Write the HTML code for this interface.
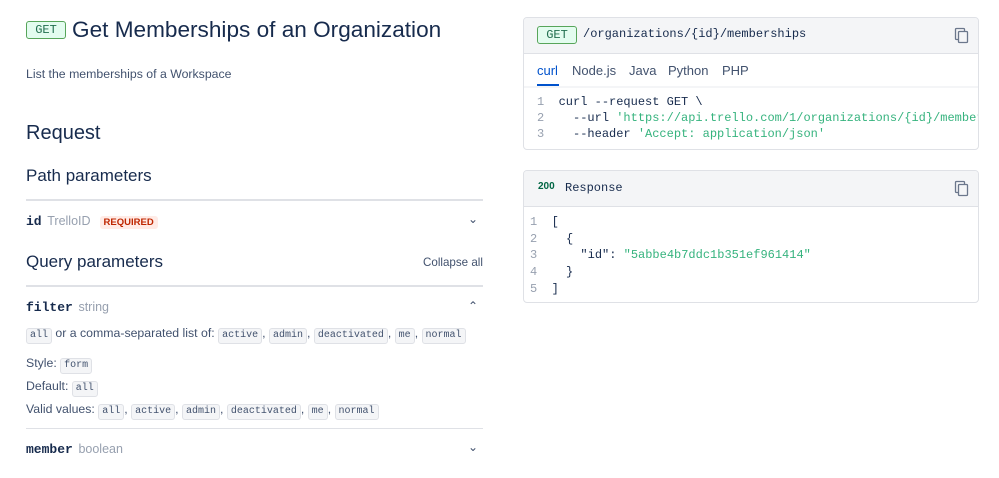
<!DOCTYPE html>
<html><head><meta charset="utf-8"><style>
*{margin:0;padding:0;box-sizing:border-box}
body{width:999px;height:478px;background:#fff;font-family:"Liberation Sans",sans-serif;color:#172b4d;position:relative;overflow:hidden}
.a{position:absolute;white-space:nowrap}
.m{font-family:"Liberation Mono",monospace}
.c{font-family:"Liberation Mono",monospace;font-size:10px;background:#f4f5f7;border:1px solid #dfe1e6;border-radius:3px;padding:0 3px;color:#42526e;line-height:14px;display:inline-block}
.t{font-size:12.3px;color:#42526e}
.hr{position:absolute;left:26px;width:457px;height:2px;background:#dfe1e6}
.card{position:absolute;left:523px;width:456px;border:1px solid #dfe1e6;border-radius:4px;overflow:hidden}
.hd{background:#f4f5f7;height:36px;border-bottom:1px solid #dfe1e6;position:relative}
.code{font-family:"Liberation Mono",monospace;font-size:12px;color:#172b4d;position:absolute;white-space:pre}
.ln{color:#97a0af}
.g{color:#36b37e}
</style></head><body>
<div class="a m" style="left:26px;top:21px;width:40px;height:18px;border:1px solid #57a55a;background:#e3fcef;border-radius:3px;color:#216e4e;font-size:12px;text-align:center;line-height:16px">GET</div>
<div class="a" style="left:72px;top:17px;font-size:22.6px;color:#172b4d">Get Memberships of an Organization</div>
<div class="a t" style="left:26px;top:67px">List the memberships of a Workspace</div>
<div class="a" style="left:26px;top:122px;font-size:20px">Request</div>
<div class="a" style="left:26px;top:166px;font-size:17px">Path parameters</div>
<div class="hr" style="top:199px"></div>
<div class="a" style="left:26px;top:213px;font-size:13px"><b class="m" style="font-size:13px">id</b> <span style="color:#97a0af;margin-left:2px;font-size:12.5px">TrelloID</span><span style="margin-left:9px;background:#ffebe6;color:#bf2600;font-size:9.5px;font-weight:bold;padding:1px 4px;border-radius:3px">REQUIRED</span></div>
<div class="a" style="left:468px;top:212px;font-size:12px;color:#42526e">⌄</div>
<div class="a" style="left:26px;top:252px;font-size:17px">Query parameters</div>
<div class="a" style="left:423px;top:256px;font-size:11.6px;color:#42526e">Collapse all</div>
<div class="hr" style="top:285px"></div>
<div class="a" style="left:26px;top:299px;font-size:13px"><b class="m" style="font-size:13px">filter</b> <span style="color:#97a0af;margin-left:2px;font-size:12.5px">string</span></div>
<div class="a" style="left:468px;top:299px;font-size:12px;color:#42526e">⌃</div>
<div class="a t" style="left:26px;top:326px"><span class="c">all</span> or a comma-separated list of: <span class="c">active</span>, <span class="c">admin</span>, <span class="c">deactivated</span>, <span class="c">me</span>, <span class="c">normal</span></div>
<div class="a t" style="left:26px;top:356px">Style: <span class="c">form</span></div>
<div class="a t" style="left:26px;top:379px">Default: <span class="c">all</span></div>
<div class="a t" style="left:26px;top:402px">Valid values: <span class="c">all</span>, <span class="c">active</span>, <span class="c">admin</span>, <span class="c">deactivated</span>, <span class="c">me</span>, <span class="c">normal</span></div>
<div class="hr" style="top:428px;height:1px"></div>
<div class="a" style="left:26px;top:441px;font-size:13px"><b class="m" style="font-size:13px">member</b> <span style="color:#97a0af;margin-left:2px;font-size:12.5px">boolean</span></div>
<div class="a" style="left:468px;top:440px;font-size:12px;color:#42526e">⌄</div>

<div class="card" style="top:17px;height:133px">
 <div class="hd">
  <div class="a m" style="left:13px;top:8px;width:40px;height:18px;border:1px solid #57a55a;background:#e3fcef;border-radius:3px;color:#216e4e;font-size:12px;text-align:center;line-height:16px">GET</div>
  <div class="a m" style="left:59px;top:9px;font-size:12px;color:#172b4d">/organizations/{id}/memberships</div>
  <svg class="a" style="left:430px;top:9px" width="16" height="17" viewBox="0 0 16 17"><rect x="1.5" y="1.5" width="9" height="11" rx="1" fill="none" stroke="#6b778c" stroke-width="1.3"/><rect x="4.5" y="4.5" width="9" height="11" rx="1" fill="#f4f5f7" stroke="#6b778c" stroke-width="1.3"/></svg>
 </div>
 <div style="height:34px;border-bottom:2px solid #f4f5f7;position:relative;font-size:13px">
  <span class="a" style="left:13px;top:9px;color:#0052cc">curl</span>
  <div class="a" style="left:13px;top:30px;width:22px;height:2px;background:#0052cc"></div>
  <span class="a" style="left:48px;top:9px;color:#42526e">Node.js</span>
  <span class="a" style="left:105px;top:9px;color:#42526e">Java</span>
  <span class="a" style="left:144px;top:9px;color:#42526e">Python</span>
  <span class="a" style="left:198px;top:9px;color:#42526e">PHP</span>
 </div>
 <div class="code" style="left:13px;top:76px;line-height:16px"><span class="ln">1</span>  curl --request GET \
<span class="ln">2</span>    --url <span class="g">'https://api.trello.com/1/organizations/{id}/memberships'</span> \
<span class="ln">3</span>    --header <span class="g">'Accept: application/json'</span></div>
</div>

<div class="card" style="top:170px;height:133px">
 <div class="hd">
  <div class="a" style="left:14px;top:10px;font-size:10px;font-weight:bold;color:#006644">200</div>
  <div class="a m" style="left:41px;top:10px;font-size:12px;color:#172b4d">Response</div>
  <svg class="a" style="left:430px;top:9px" width="16" height="17" viewBox="0 0 16 17"><rect x="1.5" y="1.5" width="9" height="11" rx="1" fill="none" stroke="#6b778c" stroke-width="1.3"/><rect x="4.5" y="4.5" width="9" height="11" rx="1" fill="#f4f5f7" stroke="#6b778c" stroke-width="1.3"/></svg>
 </div>
 <div class="code" style="left:6px;top:43px;line-height:16.7px"><span class="ln">1</span>  [
<span class="ln">2</span>    {
<span class="ln">3</span>      "id": <span class="g">"5abbe4b7ddc1b351ef961414"</span>
<span class="ln">4</span>    }
<span class="ln">5</span>  ]</div>
</div>
</body></html>
